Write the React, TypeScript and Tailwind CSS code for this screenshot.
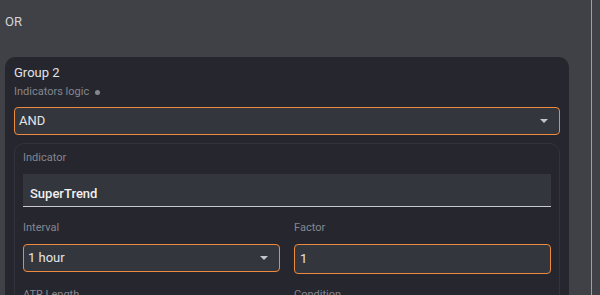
const Caret = () => (
  <svg width="8" height="4" viewBox="0 0 8 4" className="shrink-0">
    <path d="M0 0h8L4 4z" fill="#c4c5c9" />
  </svg>
);

export default function App() {
  return (
    <div
      className="w-[600px] h-[295px] overflow-hidden bg-[#404147] flex"
      style={{ fontFamily: "Roboto, 'Liberation Sans', sans-serif" }}
    >
      <main className="w-[591px] shrink-0 pl-[5px] pr-[22px]">
        <div className="pt-[12px] text-[13px] leading-[20px] text-[#d4d5d9]">OR</div>

        <section className="mt-[25px] rounded-[10px] bg-[#25262e] px-[9px] pt-[6px] pb-4">
          <h2 className="text-[13px] leading-[20px] text-[#e2e3e6]">Group 2</h2>
          <div className="mt-px flex items-center gap-[6px] text-[11px] leading-[16px] text-[#86878e]">
            Indicators logic
            <span className="w-[5px] h-[5px] rounded-full bg-[#86878e]" />
          </div>

          <div className="mt-[7px] h-[28px] rounded-[4px] border border-[#ee8a3f] bg-[#34363d] pl-[4px] pr-[11px] flex items-center justify-between">
            <span className="text-[13px] text-[#e4e5e8]">AND</span>
            <Caret />
          </div>

          <div className="mt-[8px] rounded-[10px] border border-[#33343b] px-[8px] pt-[6px] pb-6">
            <div className="text-[11px] leading-[16px] text-[#86878e]">Indicator</div>
            <div className="mt-[8px] h-[33px] bg-[#34363d] border-b border-[#c9cace] pl-[7px] pt-[7px] flex items-center">
              <span className="text-[13px] font-medium text-[#f0f0f2]">SuperTrend</span>
            </div>

            <div className="mt-[13px] grid grid-cols-2 gap-x-[14px]">
              <div>
                <div className="text-[11px] leading-[16px] text-[#86878e]">Interval</div>
                <div className="mt-[8px] h-[28px] rounded-[4px] border border-[#ee8a3f] bg-[#34363d] pl-[4px] pr-[11px] flex items-center justify-between">
                  <span className="text-[13px] text-[#e4e5e8]">1 hour</span>
                  <Caret />
                </div>
              </div>
              <div>
                <div className="text-[11px] leading-[16px] text-[#86878e]">Factor</div>
                <div className="mt-[8px] h-[30px] rounded-[4px] border border-[#ee8a3f] bg-[#34363d] pl-[5px] flex items-center">
                  <span className="text-[13px] text-[#e4e5e8]">1</span>
                </div>
              </div>
            </div>

            <div className="mt-[13px] grid grid-cols-2 gap-x-[14px]">
              <div className="text-[11px] leading-[16px] text-[#86878e]">ATR Length</div>
              <div className="text-[11px] leading-[16px] text-[#86878e]">Condition</div>
            </div>
          </div>
        </section>
      </main>
      <div className="w-px shrink-0 bg-[#ee8a3f]" />
    </div>
  );
}
